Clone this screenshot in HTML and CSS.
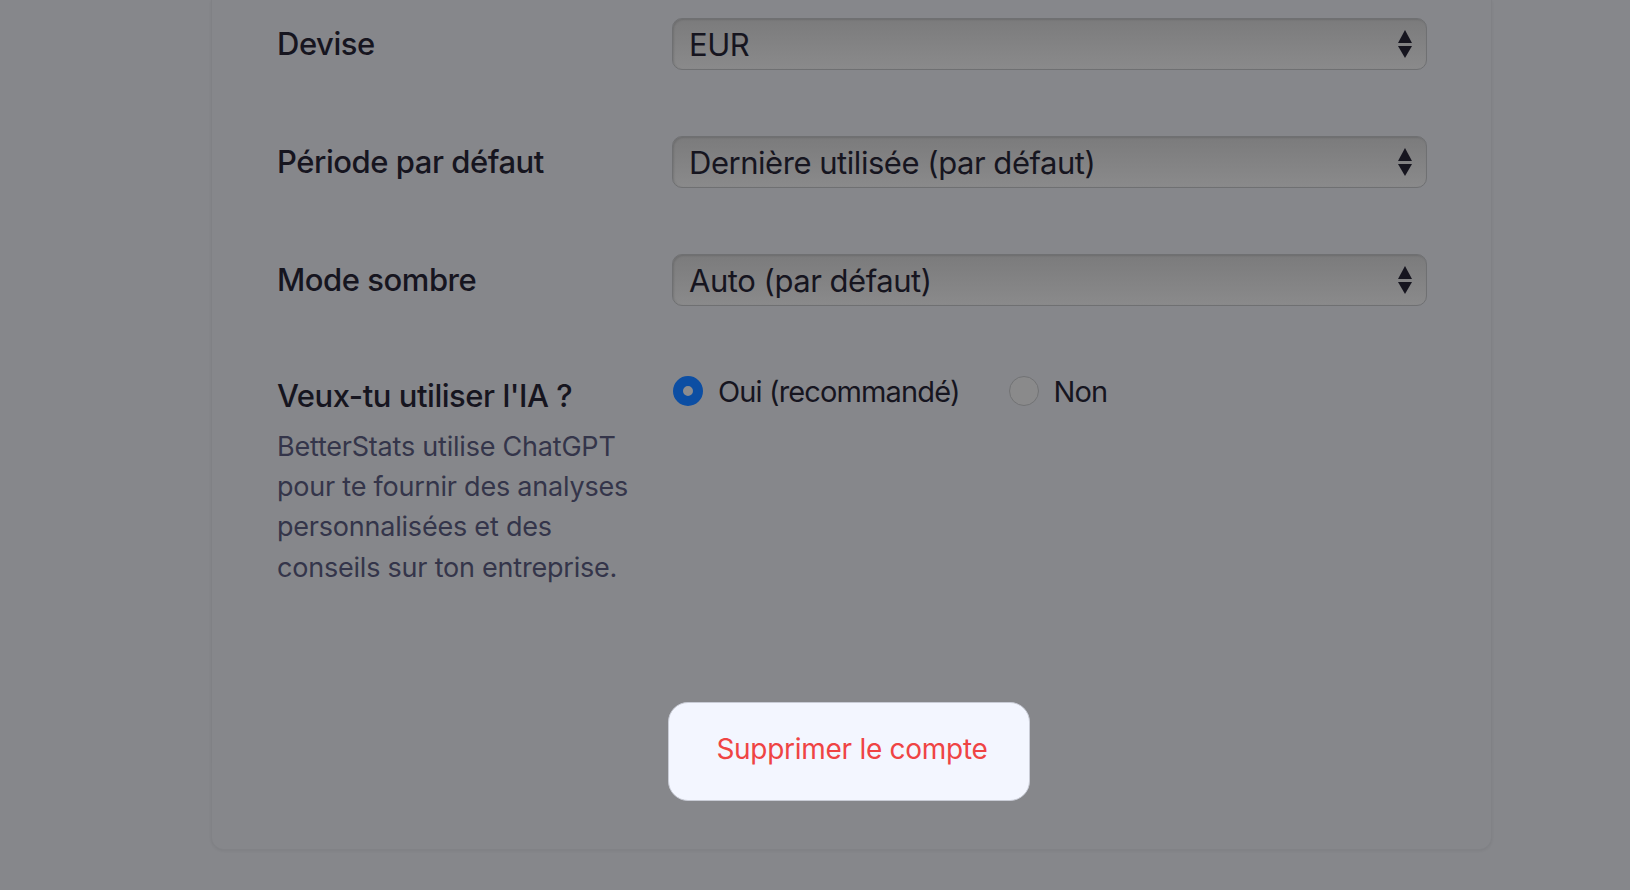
FILE: index.html
```html
<!DOCTYPE html>
<html lang="fr">
<head>
<meta charset="utf-8">
<title>Paramètres</title>
<link rel="stylesheet" href="styles.css">
</head>
<body>
<main class="page">
  <section class="card">
    <div class="row">
      <div class="label">Devise</div>
      <div class="select">
        <span class="select-value">EUR</span>
        <svg class="arrows" width="16" height="30" viewBox="0 0 16 30"><path d="M8 1 L15 14 L1 14 Z" fill="#16151f"/><path d="M1 17 L15 17 L8 29 Z" fill="#16151f"/></svg>
      </div>
    </div>
    <div class="row">
      <div class="label">Période par défaut</div>
      <div class="select">
        <span class="select-value">Dernière utilisée (par défaut)</span>
        <svg class="arrows" width="16" height="30" viewBox="0 0 16 30"><path d="M8 1 L15 14 L1 14 Z" fill="#16151f"/><path d="M1 17 L15 17 L8 29 Z" fill="#16151f"/></svg>
      </div>
    </div>
    <div class="row">
      <div class="label">Mode sombre</div>
      <div class="select">
        <span class="select-value">Auto (par défaut)</span>
        <svg class="arrows" width="16" height="30" viewBox="0 0 16 30"><path d="M8 1 L15 14 L1 14 Z" fill="#16151f"/><path d="M1 17 L15 17 L8 29 Z" fill="#16151f"/></svg>
      </div>
    </div>
    <div class="row row-ai">
      <div class="label-block">
        <div class="label">Veux-tu utiliser l'IA ?</div>
        <p class="desc">BetterStats utilise ChatGPT pour te fournir des analyses personnalisées et des conseils sur ton entreprise.</p>
      </div>
      <div class="radios">
        <label class="radio-item"><span class="radio checked"></span><span class="radio-text">Oui (recommandé)</span></label>
        <label class="radio-item"><span class="radio"></span><span class="radio-text">Non</span></label>
      </div>
    </div>
    <div class="actions">
      <button class="danger-btn" type="button">Supprimer le compte</button>
    </div>
  </section>
</main>
</body>
</html>
```

FILE: styles.css
```css
html, body {
  margin: 0;
  padding: 0;
}

body {
  background: #86878b;
  font-family: Inter, "Noto Sans", "Liberation Sans", sans-serif;
  color: #16151f;
  width: 1630px;
  height: 890px;
  overflow: hidden;
}

.page {
  padding-left: 211px;
  width: 1281px;
}

.card {
  width: 1281px;
  box-sizing: border-box;
  padding: 18px 64px 48px 65px;
  border: 1px solid rgba(0, 0, 0, 0.035);
  border-top: none;
  border-radius: 0 0 13px 13px;
  box-shadow: 0 1px 3px rgba(0, 0, 0, 0.06);
}

.row {
  display: grid;
  grid-template-columns: 395px 1fr;
  align-items: center;
  margin-bottom: 66px;
}

.label {
  font-size: 31px;
  line-height: 40px;
  font-weight: 500;
  letter-spacing: -0.015em;
  color: #16151f;
}

.select {
  height: 52px;
  box-sizing: border-box;
  border: 1.5px solid #6f7072;
  border-radius: 10px;
  background: linear-gradient(#7b7b7c, #8a8a8b);
  box-shadow: inset 1px 1px 2px rgba(0, 0, 0, 0.12);
  display: flex;
  align-items: center;
  justify-content: space-between;
  padding: 0 13px 0 16px;
}

.select-value {
  font-size: 31px;
  letter-spacing: -0.015em;
  color: #16151f;
  line-height: 1;
}

.arrows {
  display: block;
}

.row-ai {
  align-items: start;
  margin-top: 70px;
  margin-bottom: 0;
}

.desc {
  margin: 11px 0 0;
  font-size: 27px;
  line-height: 40.2px;
  letter-spacing: -0.008em;
  color: #34354a;
  width: 365px;
}

.radios {
  display: flex;
  align-items: center;
  height: 30px;
  padding-left: 1px;
}

.radio-item {
  display: flex;
  align-items: center;
  margin-right: 49px;
}

.radio {
  width: 30px;
  height: 30px;
  box-sizing: border-box;
  border-radius: 50%;
  border: 1.5px solid #727375;
  background: #8a8a8b;
  margin-right: 15px;
}

.radio.checked {
  border: 10px solid #0c4ea3;
  background: #8c8c8e;
}

.radio-text {
  font-size: 29px;
  letter-spacing: -0.03em;
  color: #16151f;
  line-height: 1;
}

.radio-item:last-child .radio {
  margin-right: 15px;
}

.actions {
  display: flex;
  justify-content: center;
  margin-top: 114px;
}

.danger-btn {
  width: 362px;
  height: 99px;
  margin-right: 7px;
  border: 1px solid #c9ccd6;
  border-radius: 20px;
  background: #f3f6ff;
  color: #ef4444;
  font-family: Inter, "Noto Sans", "Liberation Sans", sans-serif;
  font-size: 28px;
  letter-spacing: -0.01em;
  padding: 0 0 5px 7px;
  cursor: pointer;
}
```
